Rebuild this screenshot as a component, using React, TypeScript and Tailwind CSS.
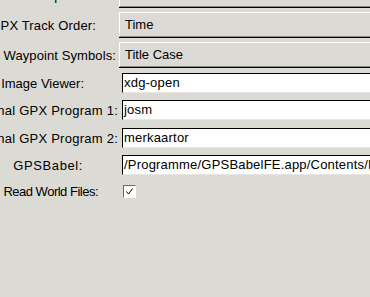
const font = { fontFamily: '"Liberation Sans", Arial, sans-serif' };

function Label({ text, pr, track = "" }: { text: string; pr: string; track?: string }) {
  return (
    <div className={`flex w-[119px] shrink-0 justify-end ${pr}`}>
      <span className={`whitespace-nowrap text-[13px] leading-[15px] text-black ${track}`}>{text}</span>
    </div>
  );
}

function MenuButton({ value }: { value: string }) {
  return (
    <div className="h-[26px] flex-1 border-b border-b-black">
      <div className="flex h-[25px] items-center border-t border-l border-t-white border-l-white border-b border-b-[#8c8a85] pl-[5px] text-[13px] text-black">
        {value}
      </div>
    </div>
  );
}

function Entry({ value }: { value: string }) {
  return (
    <div className="ml-[3px] flex h-[20px] flex-1 items-center overflow-hidden border-t border-l border-t-black border-l-black border-b border-b-[#e8e6e2] bg-white pl-[1px] text-[13px] tracking-[0.2px] whitespace-nowrap text-black">
      {value}
    </div>
  );
}

export default function App() {
  return (
    <div className="h-[297px] w-[370px] overflow-hidden bg-[#dcdad5]" style={font}>
      <div className="-mt-[18px] flex w-[440px] flex-col">
        <div className="flex items-center">
          <Label text="Map Source:" pr="pr-[9px]" />
          <MenuButton value="" />
        </div>
        <div className="mt-[4px] flex items-center">
          <Label text="GPX Track Order:" pr="pr-[23px]" track="tracking-[0.15px]" />
          <MenuButton value="Time" />
        </div>
        <div className="mt-[4px] flex items-center">
          <Label text="Waypoint Symbols:" pr="pr-[3px]" track="tracking-[0.1px]" />
          <MenuButton value="Title Case" />
        </div>
        <div className="mt-[5px] flex items-center">
          <Label text="Image Viewer:" pr="pr-[35px]" />
          <Entry value="xdg-open" />
        </div>
        <div className="mt-[7px] flex items-center">
          <Label text="External GPX Program 1:" pr="pr-[1px]" track="tracking-[0.25px]" />
          <Entry value="josm" />
        </div>
        <div className="mt-[8px] flex items-center">
          <Label text="External GPX Program 2:" pr="pr-[1px]" track="tracking-[0.25px]" />
          <Entry value="merkaartor" />
        </div>
        <div className="mt-[7px] flex items-center">
          <Label text="GPSBabel:" pr="pr-[36px]" track="tracking-[0.6px]" />
          <Entry value="/Programme/GPSBabelFE.app/Contents/MacOS/gpsbabel" />
        </div>
        <div className="mt-[6px] flex h-[20px] items-center">
          <Label text="Read World Files:" pr="pr-[21px]" track="tracking-[-0.5px]" />
          <div className="ml-[4px] flex h-[13px] w-[13px] items-center justify-center border-t border-l border-t-[#6b6965] border-l-[#6b6965] border-b border-r border-b-white border-r-white bg-white">
            <svg width="9" height="9" viewBox="0 0 9 9">
              <path d="M1.5 4.5 L3.5 7 L7.5 1.5" fill="none" stroke="#000" strokeWidth="1" />
            </svg>
          </div>
        </div>
      </div>
    </div>
  );
}
